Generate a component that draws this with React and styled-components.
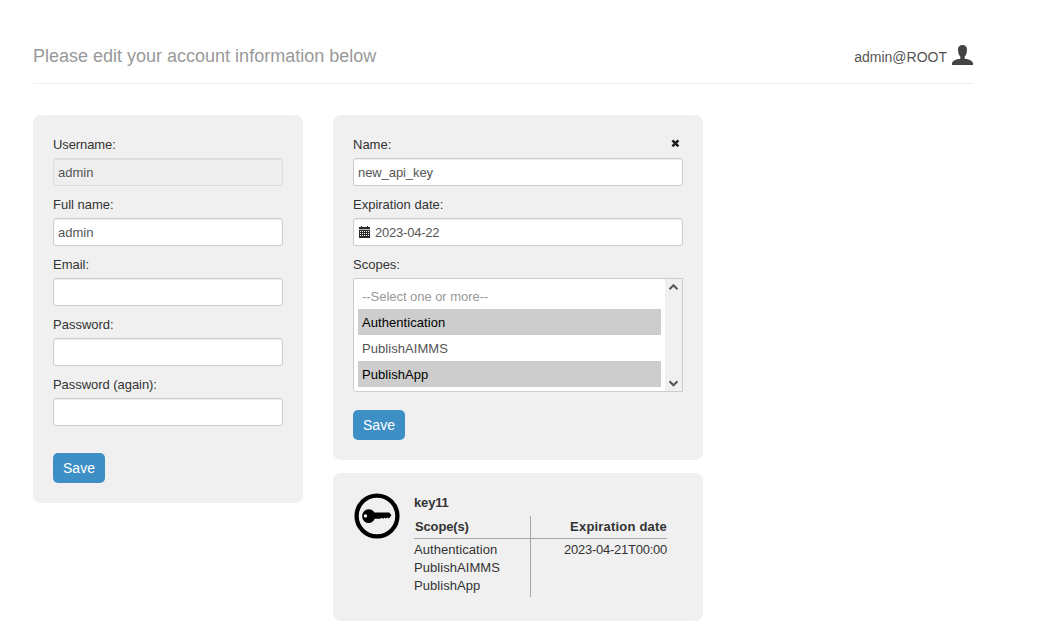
import React from 'react';
import styled, { createGlobalStyle } from 'styled-components';

const GlobalStyle = createGlobalStyle`
  * { box-sizing: border-box; }
  body {
    margin: 0;
    background: #fff;
    color: #333;
    font: 13px/18px "Liberation Sans", Arial, sans-serif;
  }
`;

const Page = styled.main`
  width: 973px;
  padding: 38px 0 0 33px;
`;

const Header = styled.header`
  display: flex;
  justify-content: space-between;
  height: 46px;
  margin-bottom: 31px;
  border-bottom: 1px solid #eee;
`;

const Title = styled.h1`
  margin: 0;
  color: #999;
  font-size: 18px;
  font-weight: 400;
  line-height: 36px;
`;

const User = styled.div`
  display: flex;
  align-items: flex-start;
  gap: 5px;
  color: #555;
  font-size: 14px;
  line-height: 38px;
  svg { margin-top: 7px; }
`;

const Columns = styled.div`
  display: flex;
  align-items: flex-start;
  gap: 30px;
`;

const Stack = styled.div`
  display: flex;
  flex-direction: column;
  gap: 13px;
`;

const Panel = styled.section`
  width: ${(p) => p.$width}px;
  padding: 20px;
  border-radius: 8px;
  background: #f0f0f0;
`;

const Field = styled.div`
  margin-bottom: 9px;
`;

const LabelRow = styled.div`
  display: flex;
  justify-content: space-between;
  height: 18px;
  margin-bottom: 5px;
  padding-right: 3px;
  line-height: 20px;
  letter-spacing: ${(p) => p.$tracking || 0}px;
  svg { margin-top: 4px; }
`;

const Control = styled.div`
  display: flex;
  align-items: center;
  gap: 5px;
  height: 28px;
  padding: 0 ${(p) => (p.$icon ? 5 : 4)}px;
  border: 1px solid ${(p) => (p.$disabled ? '#ddd' : '#ccc')};
  border-radius: 3px;
  background: ${(p) => (p.$disabled ? '#eee' : '#fff')};
  box-shadow: inset 0 1px 1px rgba(0, 0, 0, 0.075);
  color: #555;
  line-height: 20px;
  letter-spacing: ${(p) => p.$tracking || 0}px;
`;

const ControlText = styled.span`
  padding-top: 1px;
`;

const ListBox = styled.div`
  display: flex;
  justify-content: space-between;
  height: 114px;
  border: 1px solid #ccc;
  border-radius: 3px 0 0 3px;
  background: #fff;
`;

const Options = styled.div`
  width: 307px;
  padding: 4px 0 4px 4px;
`;

const Option = styled.div`
  height: 26px;
  padding-left: 4px;
  line-height: 28px;
  letter-spacing: ${(p) => (p.$muted ? -0.04 : 0.06)}px;
  color: ${(p) => (p.$selected ? '#000' : p.$muted ? '#999' : '#555')};
  background: ${(p) => (p.$selected ? '#cdcdcd' : 'transparent')};
`;

const ScrollBar = styled.div`
  display: flex;
  flex-direction: column;
  align-items: center;
  justify-content: space-between;
  width: 17px;
  padding: 5px 0 4px;
  background: #f0f0f0;
`;

const Button = styled.button`
  display: block;
  width: 52px;
  height: 30px;
  margin-top: ${(p) => p.$top}px;
  padding: 0;
  border: 0;
  border-radius: 5px;
  background: #3d8fc6;
  color: #fff;
  font: 14px/30px "Liberation Sans", Arial, sans-serif;
`;

const KeyCard = styled(Panel)`
  display: flex;
  gap: 14px;
  height: 148px;
  padding: 20px 21px;
`;

const KeyDetails = styled.div`
  width: 253px;
`;

const KeyName = styled.div`
  height: 23px;
  font-weight: 700;
  line-height: 19px;
  letter-spacing: -0.15px;
`;

const KeyTable = styled.div`
  display: grid;
  grid-template-columns: 117px 136px;
`;

const Cell = styled.div`
  height: ${(p) => (p.$head ? 23 : 58)}px;
  padding: ${(p) => (p.$head ? '2px 0 0 1px' : '2px 0 0')};
  border-bottom: ${(p) => (p.$head ? '1px solid #a5a5a5' : '0')};
  border-right: ${(p) => (p.$right ? '0' : '1px solid #a5a5a5')};
  font-weight: ${(p) => (p.$head ? 700 : 400)};
  text-align: ${(p) => (p.$right ? 'right' : 'left')};
  letter-spacing: ${(p) => p.$tracking || 0}px;
`;

const UserIcon = () => (
  <svg width="21" height="20" viewBox="0 0 21 20" fill="#444">
    <path d="M10.500 0C7.700 0 6 1.600 6 4.600c0 3.300.8 5.600 2.300 7v2.100C4 14.300 0 15.600 0 18.600V20h21v-1.400c0-3-4-4.300-8.300-4.900v-2.100c1.500-1.400 2.300-3.700 2.300-7C15 1.600 13.300 0 10.500 0z" />
  </svg>
);

const CloseIcon = () => (
  <svg width="9" height="9" viewBox="0 0 9 9" fill="none" stroke="#1f1f1f" strokeWidth="2.6">
    <path d="M1.400 1.400l6 6M7.400 1.400l-6 6" />
  </svg>
);

const CalendarIcon = () => (
  <svg width="11" height="12" viewBox="0 0 11 12" shapeRendering="crispEdges">
    <path fill="#2a2a2a" d="M0 1h2V0h1v1h5V0h1v1h2v11H0z" />
    <path fill="#bbb" d="M0 3h11v1H0z" />
    <path
      fill="#fff"
      d="M1 5h1v1H1zM3 5h1v1H3zM5 5h1v1H5zM7 5h1v1H7zM9 5h1v1H9zM1 7h1v1H1zM3 7h1v1H3zM5 7h1v1H5zM7 7h1v1H7zM9 7h1v1H9zM1 9h1v1H1zM3 9h1v1H3zM5 9h1v1H5zM7 9h1v1H7zM9 9h1v1H9z"
    />
  </svg>
);

const Chevron = ({ down }) => (
  <svg width="10" height="7" viewBox="0 0 10 7" fill="none" stroke="#555" strokeWidth="2">
    <path d={down ? 'M.5 1.300l4 4 4-4' : 'M.5 5.200l4-4 4 4'} />
  </svg>
);

const KeyIcon = () => (
  <svg width="46" height="46" viewBox="0 0 46 46">
    <circle cx="23" cy="23" r="20.400" fill="none" stroke="#000" strokeWidth="4.300" />
    <path
      fillRule="evenodd"
      d="M14.800 16.200c2.600 0 4.600 1.300 5.700 3.300h14.700l2.300 2.800-2.600 3.200-1.500-.9-1.400 1-1.500-.9-1.400 1-1.500-.9-1.400 1h-5.500c-1 2.500-3.200 4.300-5.900 4.300-3.800 0-6.600-3.100-6.600-6.900s2.800-7 6.600-7zM11.500 21.200a1.700 1.700 0 1 0 0 3.400 1.700 1.700 0 0 0 0-3.400z"
    />
  </svg>
);

const fields = [
  { label: 'Username:', value: 'admin', disabled: true, tracking: -0.1 },
  { label: 'Full name:', value: 'admin' },
  { label: 'Email:' },
  { label: 'Password:' },
  { label: 'Password (again):', tracking: -0.05 },
];

const scopes = [
  { name: '--Select one or more--', muted: true },
  { name: 'Authentication', selected: true },
  { name: 'PublishAIMMS' },
  { name: 'PublishApp', selected: true },
];

export default function App() {
  return (
    <Page>
      <GlobalStyle />
      <Header>
        <Title>Please edit your account information below</Title>
        <User>
          admin@ROOT
          <UserIcon />
        </User>
      </Header>
      <Columns>
        <Panel $width={270}>
          {fields.map((f) => (
            <Field key={f.label}>
              <LabelRow $tracking={f.tracking}>{f.label}</LabelRow>
              <Control $disabled={f.disabled}>
                <ControlText>{f.value}</ControlText>
              </Control>
            </Field>
          ))}
          <Button $top={27}>Save</Button>
        </Panel>
        <Stack>
          <Panel $width={370}>
            <Field>
              <LabelRow>
                Name:
                <CloseIcon />
              </LabelRow>
              <Control $tracking={-0.08}>
                <ControlText>new_api_key</ControlText>
              </Control>
            </Field>
            <Field>
              <LabelRow>Expiration date:</LabelRow>
              <Control $icon $tracking={-0.22}>
                <CalendarIcon />
                <ControlText>2023-04-22</ControlText>
              </Control>
            </Field>
            <Field>
              <LabelRow>Scopes:</LabelRow>
              <ListBox>
                <Options>
                  {scopes.map((s) => (
                    <Option key={s.name} $selected={s.selected} $muted={s.muted}>
                      {s.name}
                    </Option>
                  ))}
                </Options>
                <ScrollBar>
                  <Chevron />
                  <Chevron down />
                </ScrollBar>
              </ListBox>
            </Field>
            <Button $top={18}>Save</Button>
          </Panel>
          <KeyCard $width={370}>
            <KeyIcon />
            <KeyDetails>
              <KeyName>key11</KeyName>
              <KeyTable>
                <Cell $head $tracking={-0.15}>Scope(s)</Cell>
                <Cell $head $right $tracking={0.2}>
                  Expiration date
                </Cell>
                <Cell $tracking={0.06}>
                  Authentication
                  <br />
                  PublishAIMMS
                  <br />
                  PublishApp
                </Cell>
                <Cell $right $tracking={-0.25}>2023-04-21T00:00</Cell>
              </KeyTable>
            </KeyDetails>
          </KeyCard>
        </Stack>
      </Columns>
    </Page>
  );
}
